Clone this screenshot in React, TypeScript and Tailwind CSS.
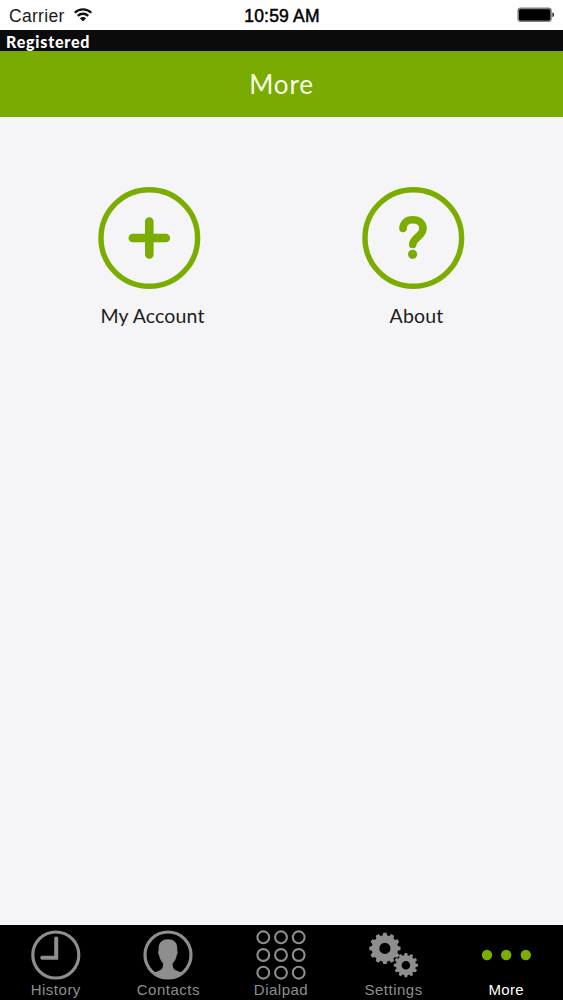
import type { ReactNode } from 'react';
import { clsx } from 'clsx';

const GREEN = '#7aad00';
const GRAY = '#8e8e8e';

// Outline of a cog wheel around (cx, cy)
function gearPath(cx: number, cy: number, outer: number, root: number, teeth: number, hole: number) {
  const step = (Math.PI * 2) / teeth;
  const points: string[] = [];
  for (let i = 0; i < teeth; i++) {
    const mid = i * step - Math.PI / 2;
    const corners = [
      [root, -0.34],
      [outer, -0.2],
      [outer, 0.2],
      [root, 0.34],
    ];
    corners.forEach(([r, offset]) => {
      const a = mid + offset * step;
      points.push(`${(cx + r * Math.cos(a)).toFixed(2)} ${(cy + r * Math.sin(a)).toFixed(2)}`);
    });
  }
  return `M${points.join('L')}ZM${cx - hole} ${cy}a${hole} ${hole} 0 1 0 ${hole * 2} 0a${hole} ${hole} 0 1 0 ${-hole * 2} 0Z`;
}

function WifiIcon() {
  return (
    <svg width="18" height="14" viewBox="0 0 18 14" fill="none" stroke="#111" strokeWidth="2.3">
      <path d="M0.8 4.8a11.6 11.6 0 0 1 16.4 0" />
      <path d="M3.8 7.9a7.4 7.4 0 0 1 10.4 0" />
      <path d="M9 13.4L5.9 10.3a4.4 4.4 0 0 1 6.2 0Z" fill="#111" stroke="none" />
    </svg>
  );
}

function BatteryIcon() {
  return (
    <svg width="38" height="16" viewBox="0 0 38 16">
      <rect x="1.2" y="1.4" width="32.8" height="12.8" rx="2.4" fill="#000" stroke="#808080" strokeWidth="1.6" />
      <path d="M35.3 5.2a2.6 2.6 0 0 1 0 5Z" fill="#333" />
    </svg>
  );
}

function StatusBar() {
  return (
    <div className="grid h-[30px] shrink-0 grid-cols-3 items-center bg-white pr-[8px] pl-[9px] font-['Liberation_Sans',sans-serif] text-[17.5px] leading-[28px] text-[#1a1a1a]">
      <div className="flex items-center gap-[9px]">
        <span className="pt-[2px] tracking-[0.3px]">Carrier</span>
        <WifiIcon />
      </div>
      <span className="pt-[2px] text-center tracking-[0.2px] whitespace-nowrap text-black [-webkit-text-stroke:0.5px_#000]">
        10:59 AM
      </span>
      <div className="flex justify-end">
        <BatteryIcon />
      </div>
    </div>
  );
}

function Tile({ label, children }: { label: string; children: ReactNode }) {
  return (
    <div className="flex w-[110px] flex-col items-center">
      <svg width="104" height="104" viewBox="0 0 104 104" fill="none" stroke={GREEN}>
        <circle cx="52.3" cy="52" r="48.3" strokeWidth="5.4" />
        {children}
      </svg>
      <span className="mt-[14px] pl-[7px] text-[19.5px] leading-[24px] tracking-[0.15px] whitespace-nowrap text-[#1c1c1c]">
        {label}
      </span>
    </div>
  );
}

function HistoryIcon() {
  return (
    <svg width="50" height="50" viewBox="0 0 50 50" fill="none" stroke={GRAY}>
      <circle cx="24.8" cy="25" r="23" strokeWidth="3.2" />
      <path d="M25.2 8.5V27.8H11.2" strokeWidth="4" strokeLinecap="round" />
    </svg>
  );
}

function ContactsIcon() {
  return (
    <svg width="50" height="50" viewBox="0 0 50 50" fill={GRAY}>
      <circle cx="25" cy="25" r="23" fill="none" stroke={GRAY} strokeWidth="3.2" />
      <path d="M25 9.2C19 9.2 15.6 12.6 15.6 18.500v2c-.8 1-.6 3.300.4 4.500.6 3.500 2 6.200 4.200 8.500 0 4-1 6-4.400 7.300-2.500 1-4.500 1.500-5.800 2.600C14 46.500 19 48.500 25 48.500s11-2 14.800-5.100c-1.300-1.100-3.300-1.600-5.800-2.600-3.400-1.300-4.400-3.300-4.400-7.300 2.200-2.300 3.600-5 4.200-8.500 1-1.200 1.200-3.500.4-4.500v-2C34.400 12.600 31 9.200 25 9.200Z" />
    </svg>
  );
}

function DialpadIcon() {
  const spots = [7.3, 25, 42.7];
  return (
    <svg width="50" height="50" viewBox="0 0 50 50" fill="none" stroke={GRAY} strokeWidth="2.1">
      {spots.map((y) => spots.map((x) => <circle key={`${x}-${y}`} cx={x} cy={y} r="5.9" />))}
    </svg>
  );
}

function SettingsIcon() {
  return (
    <svg width="50" height="50" viewBox="0 0 50 50" fill={GRAY} fillRule="evenodd">
      <path d={gearPath(15.9, 18.4, 15.7, 13.2, 12, 5.6)} />
      <path d={gearPath(36.9, 35.2, 12.2, 10, 12, 4.3)} />
    </svg>
  );
}

function MoreIcon() {
  return (
    <svg width="50" height="50" viewBox="0 0 50 50" fill={GREEN}>
      <circle cx="6" cy="25" r="5.2" />
      <circle cx="25.2" cy="25" r="5.2" />
      <circle cx="44.8" cy="25" r="5.2" />
    </svg>
  );
}

const tabs = [
  { label: 'History', icon: <HistoryIcon /> },
  { label: 'Contacts', icon: <ContactsIcon /> },
  { label: 'Dialpad', icon: <DialpadIcon /> },
  { label: 'Settings', icon: <SettingsIcon /> },
  { label: 'More', icon: <MoreIcon />, active: true },
];

function TabBar() {
  return (
    <nav className="grid h-[75px] shrink-0 grid-cols-5 bg-black pt-[5px] font-['Liberation_Sans',sans-serif]">
      {tabs.map(({ label, icon, active }) => (
        <div key={label} className="flex flex-col items-center pr-[1px]">
          {icon}
          <span
            className={clsx(
              'mt-[1px] text-[15px] leading-[18px]',
              active ? 'tracking-[0.3px] text-white' : 'tracking-[0.5px] text-[#8e8e8e]',
            )}
          >
            {label}
          </span>
        </div>
      ))}
    </nav>
  );
}

export default function App() {
  return (
    <div className="flex h-[1000px] w-[563px] flex-col overflow-hidden bg-[#f5f4f6] font-['Lato',sans-serif]">
      <StatusBar />
      <div className="h-[21px] shrink-0 bg-[#0b0b0c] pl-[6px] text-[16px] leading-[23px] font-black tracking-[0.8px] text-white">
        Registered
      </div>
      <header className="flex h-[66px] shrink-0 items-center justify-center bg-[#79ab02] text-[26px] tracking-[0.9px] text-[#f7ffe8]">
        More
      </header>
      <main className="flex flex-1 justify-between pt-[69px] pr-[95px] pl-[94px]">
        <Tile label="My Account">
          <path d="M52.3 35.500v33M35.800 52h33" strokeWidth="8.6" strokeLinecap="round" />
        </Tile>
        <Tile label="About">
          <path
            d="M42 42.500c0-5.500 4-8.700 9.800-8.700 6 0 10.200 3.400 10.200 8.700 0 8-10 8.800-10.200 16"
            strokeWidth="7.6"
            strokeLinecap="round"
          />
          <circle cx="51.6" cy="68.3" r="4.6" fill={GREEN} stroke="none" />
        </Tile>
      </main>
      <TabBar />
    </div>
  );
}
